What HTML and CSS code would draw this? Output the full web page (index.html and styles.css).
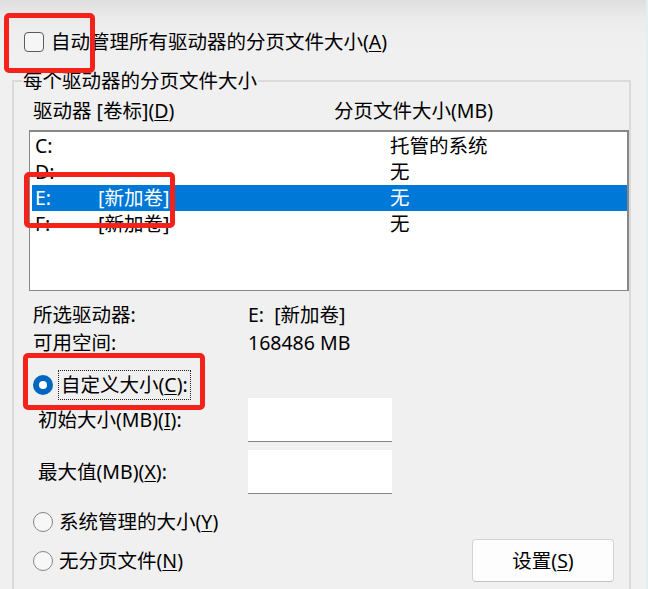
FILE: index.html
```html
<!DOCTYPE html>
<html lang="zh-CN">
<head>
<meta charset="utf-8">
<title>虚拟内存</title>
<link rel="stylesheet" href="styles.css">
</head>
<body>
<div class="page">
  <div class="auto-row">
    <span class="checkbox"></span>
    <span>自动管理所有驱动器的分页文件大小(<u>A</u>)</span>
  </div>

  <fieldset class="group">
    <legend>每个驱动器的分页文件大小</legend>

    <div class="list-head">
      <span class="col-drive">驱动器 [卷标](<u>D</u>)</span>
      <span>分页文件大小(MB)</span>
    </div>

    <div class="listbox">
      <div class="row"><span class="c-drive">C:</span><span class="c-label"></span><span>托管的系统</span></div>
      <div class="row"><span class="c-drive">D:</span><span class="c-label"></span><span>无</span></div>
      <div class="row sel"><span class="c-drive">E:</span><span class="c-label">[新加卷]</span><span>无</span></div>
      <div class="row"><span class="c-drive">F:</span><span class="c-label">[新加卷]</span><span>无</span></div>
    </div>

    <div class="info">
      <span>所选驱动器:</span><span>E:&nbsp; [新加卷]</span>
      <span>可用空间:</span><span>168486 MB</span>
    </div>

    <div class="radio-row custom">
      <span class="radio on"></span>
      <span class="focus-label">自定义大小(<u>C</u>):</span>
    </div>

    <div class="field first">
      <span>初始大小(MB)(<u>I</u>):</span>
      <span class="input"></span>
    </div>
    <div class="field second">
      <span>最大值(MB)(<u>X</u>):</span>
      <span class="input"></span>
    </div>

    <div class="radio-row system">
      <span class="radio"></span>
      <span class="radio-text">系统管理的大小(<u>Y</u>)</span>
    </div>

    <div class="last-row">
      <div class="radio-line">
        <span class="radio"></span>
        <span class="radio-text">无分页文件(<u>N</u>)</span>
      </div>
      <span class="button">设置(<u>S</u>)</span>
    </div>
  </fieldset>
</div>

<div class="mark mark-auto"></div>
<div class="mark mark-list"></div>
<div class="mark mark-custom"></div>
</body>
</html>
```

FILE: styles.css
```css
* {
  box-sizing: border-box;
}

html,
body {
  margin: 0;
  padding: 0;
}

body {
  position: relative;
  width: 648px;
  height: 589px;
  overflow: hidden;
  background-color: #f0f0f0;
  background-image: linear-gradient(to bottom, #dedede 0px, #ebebeb 18px, #efefef 36px, #f0f0f0 60px);
  background-repeat: no-repeat;
  font-family: "Noto Sans", "Noto Sans CJK SC", sans-serif;
  font-size: 19.5px;
  line-height: 24px;
  color: #000;
}

u {
  text-decoration: underline;
  text-underline-offset: 2px;
  text-decoration-thickness: 1px;
}

.page {
  padding-top: 30px;
  border-right: 2px solid #e2eff2;
  height: 589px;
}

.auto-row {
  display: flex;
  align-items: center;
  gap: 7px;
  height: 24px;
  padding-left: 24px;
}

.checkbox {
  width: 20px;
  height: 20px;
  flex: none;
  border: 1px solid #5c5c5c;
  border-radius: 4px;
  background: #f6f6f6;
}

.group {
  margin: 15px 0 0 12px;
  width: 619px;
  min-width: 0;
  border: 2px solid #dadada;
  padding: 0 0 20px 0;
}

.group legend {
  margin-left: 8px;
  padding: 0 1px;
  line-height: 24px;
}

.list-head {
  display: flex;
  height: 24px;
  margin-top: 6px;
  padding-left: 19px;
}

.col-drive {
  width: 301px;
}

.listbox {
  margin: 7px 0 0 15px;
  height: 161px;
  background: #fff;
  border: 2px solid #878787;
  border-left-width: 1px;
  border-bottom-width: 1px;
  padding-top: 1px;
}

.row {
  display: flex;
  align-items: center;
  height: 26px;
  margin-left: 2px;
  padding-left: 3px;
}

.row.sel {
  background: #0078d7;
  color: #fff;
}

.c-drive {
  width: 63px;
}

.c-label {
  width: 292px;
}

.info {
  display: grid;
  grid-template-columns: 215px 1fr;
  grid-auto-rows: 28px;
  align-items: center;
  margin-top: 10px;
  padding-left: 19px;
}

.radio-row {
  display: flex;
  align-items: center;
  height: 30px;
  padding-left: 19px;
}

.radio-row.custom {
  margin-top: 13px;
}

.radio-row.system {
  margin-top: 13px;
}

.radio {
  width: 20px;
  height: 20px;
  flex: none;
  border-radius: 50%;
  border: 1px solid #858585;
  background: #f7f7f7;
}

.radio.on {
  display: flex;
  align-items: center;
  justify-content: center;
  border: none;
  background: #0067c0;
}

.radio.on::after {
  content: "";
  width: 8px;
  height: 8px;
  border-radius: 50%;
  background: #fff;
}

.focus-label {
  height: 30px;
  margin-left: 5px;
  padding: 0 2px;
  line-height: 28px;
  border: 1px dotted #222;
}

.radio-text {
  margin-left: 6px;
}

.field {
  display: grid;
  grid-template-columns: 210px 144px;
  align-items: center;
  padding-left: 24px;
}

.field.first {
  margin-top: -2px;
}

.field.second {
  margin-top: 8px;
}

.input {
  height: 44px;
  background: #fff;
  border-bottom: 1px solid #858585;
}

.last-row {
  display: flex;
  align-items: center;
  justify-content: space-between;
  height: 43px;
  margin-top: 2px;
  padding-left: 19px;
  padding-right: 15px;
}

.radio-line {
  display: flex;
  align-items: center;
}

.button {
  display: flex;
  align-items: center;
  justify-content: center;
  width: 142px;
  height: 43px;
  background: #fdfdfd;
  border: 1px solid #d3d3d3;
  border-bottom-color: #c2c2c2;
  border-radius: 4px;
}

.mark {
  position: absolute;
  border: 5px solid #f5221b;
  border-radius: 5px;
}

.mark-auto {
  left: 4px;
  top: 13px;
  width: 91px;
  height: 60px;
}

.mark-list {
  left: 24px;
  top: 172px;
  width: 151px;
  height: 56px;
}

.mark-custom {
  left: 23px;
  top: 353px;
  width: 182px;
  height: 57px;
}
```
